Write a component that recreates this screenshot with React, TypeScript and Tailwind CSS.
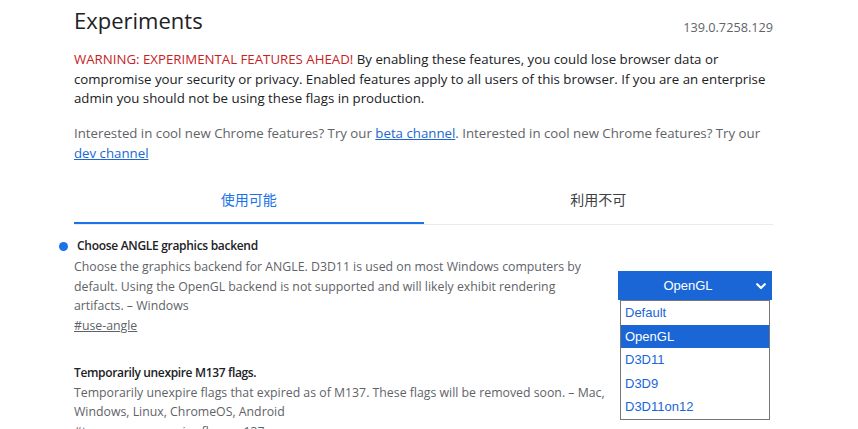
import React from "react";

export default function App() {
  return (
    <div className="w-[858px] h-[429px] overflow-hidden bg-white text-[#202124] [font-family:'Open_Sans','Noto_Sans_CJK_JP',sans-serif]">
      <div className="ml-[74px] w-[699px]">
        <div className="flex justify-between items-start pt-[4px]">
          <h1 className="text-[22px] leading-[32px] font-normal text-[#202124]">Experiments</h1>
          <div className="mt-[13px] text-[12.7px] leading-[20px] text-[#5f6368]">139.0.7258.129</div>
        </div>

        <p className="mt-[13px] text-[13.25px] leading-[19.5px] text-[#202124]">
          <span className="text-[#c5221f]">WARNING: EXPERIMENTAL FEATURES AHEAD!</span> By enabling these
          features, you could lose browser data or compromise your security or privacy. Enabled features apply to
          all users of this browser. If you are an enterprise admin you should not be using these flags in
          production.
        </p>

        <p className="mt-[15.5px] text-[13.25px] leading-[19.5px] text-[#5f6368]">
          Interested in cool new Chrome features? Try our{" "}
          <span className="text-[#1967d2] underline">beta channel</span>. Interested in cool new Chrome
          features? Try our <span className="text-[#1967d2] underline">dev channel</span>
        </p>

        <div className="mt-[14px] flex border-b border-[#e8eaed]">
          <div className="flex-1 h-[47px] flex items-center justify-center border-b-2 border-[#1a73e8] text-[14px] text-[#1a73e8]">
            使用可能
          </div>
          <div className="flex-1 h-[47px] flex items-center justify-center border-b-2 border-transparent text-[14px] text-[#3c4043]">
            利用不可
          </div>
        </div>

        <div className="mt-[11px] flex justify-between">
          <div className="w-[515px]">
            <div className="relative pl-[3px] text-[12px] leading-[20px] font-semibold tracking-[-0.3px] text-[#202124]">
              <span className="absolute left-[-15px] top-[5.5px] w-[9px] h-[9px] rounded-full bg-[#1a73e8]" />
              Choose ANGLE graphics backend
            </div>
            <p className="mt-[1px] text-[12.3px] leading-[19.5px] text-[#5f6368]">
              Choose the graphics backend for ANGLE. D3D11 is used on most Windows computers by default. Using
              the OpenGL backend is not supported and will likely exhibit rendering artifacts. – Windows
            </p>
            <div className="text-[12.3px] leading-[19.5px] text-[#5f6368] underline">#use-angle</div>
          </div>
          <div className="relative mt-[35px] mr-[1px] w-[154px] h-[29px] [font-family:'Liberation_Sans',Arial,sans-serif]">
            <div className="h-[29px] bg-[#1a66d6] text-white text-[13px] flex items-center">
              <span className="block w-full text-center pr-[14px]">OpenGL</span>
              <svg
                className="absolute right-[6px] top-[12px]"
                width="10"
                height="7"
                viewBox="0 0 10 7"
                fill="none"
              >
                <path d="M1.2 1.2 L5 5 L8.8 1.2" stroke="white" strokeWidth="2.2" strokeLinecap="round" strokeLinejoin="round" />
              </svg>
            </div>
            <div className="absolute left-[2px] top-[29px] w-[150px] border border-[#767676] bg-white text-[13px] text-[#1a66d6] z-10">
              <div className="h-[23.5px] flex items-center pl-[4px]">Default</div>
              <div className="h-[23.5px] flex items-center pl-[4px] bg-[#1a66d6] text-white">OpenGL</div>
              <div className="h-[23.5px] flex items-center pl-[4px]">D3D11</div>
              <div className="h-[23.5px] flex items-center pl-[4px]">D3D9</div>
              <div className="h-[23.5px] flex items-center pl-[4px]">D3D11on12</div>
            </div>
          </div>
        </div>

        <div className="mt-[27.5px] w-[545px]">
          <div className="text-[12px] leading-[20px] font-semibold tracking-[-0.35px] text-[#202124]">
            Temporarily unexpire M137 flags.
          </div>
          <p className="text-[12.3px] leading-[19.5px] text-[#5f6368]">
            Temporarily unexpire flags that expired as of M137. These flags will be removed soon. – Mac, Windows,
            Linux, ChromeOS, Android
          </p>
          <div className="text-[12.3px] leading-[19.5px] text-[#5f6368] underline">#temporary-unexpire-flags-m137</div>
        </div>
      </div>
    </div>
  );
}
